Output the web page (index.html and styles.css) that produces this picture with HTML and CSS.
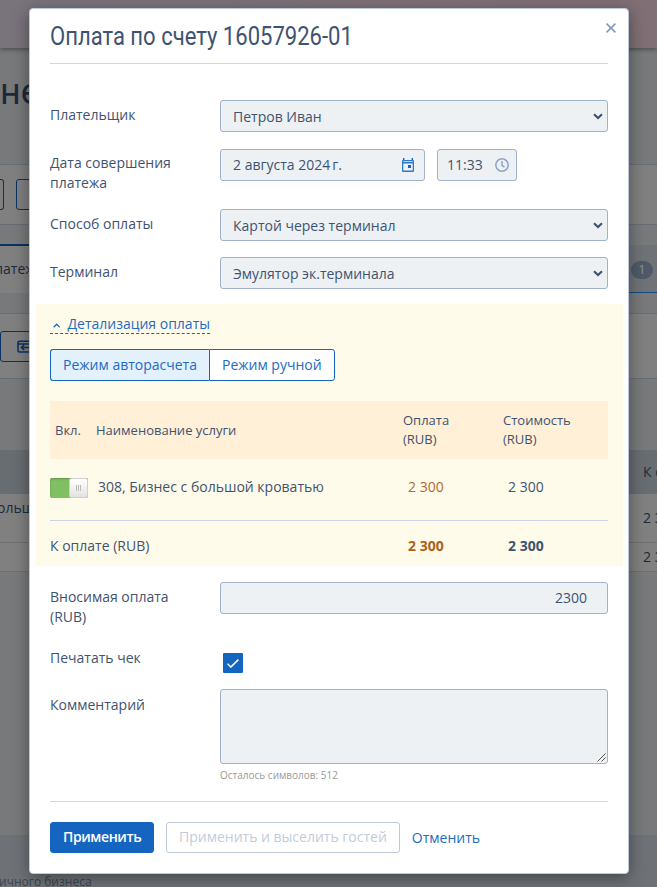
FILE: index.html
```html
<!DOCTYPE html>
<html lang="ru">
<head>
<meta charset="utf-8">
<title>Оплата по счету</title>
<link rel="stylesheet" href="styles.css">
</head>
<body>
<div class="page">
  <header class="topbar"></header>
  <section class="page-title">не</section>
  <section class="toolbar"><span class="ghost-btn ghost-btn-end"></span><span class="ghost-btn"></span></section>
  <div class="spacer"></div>
  <nav class="tabs"><span class="tab-active">латеж</span><span class="tab-count"><span class="count">1</span></span></nav>
  <div class="spacer-line"></div>
  <section class="actions">
    <span class="ghost-btn action-btn">
      <svg width="15" height="14" viewBox="0 0 15 14" fill="none" stroke="#0a3261" stroke-width="1.6"><path d="M13 3V1.2H2.5Q1 1.2 1 2.7V10.5Q1 12 2.5 12H13V10M1 4H13M14 7.5H4.5M7 5L4.5 7.5L7 10"/></svg>
    </span>
  </section>
  <div class="gap"></div>
  <div class="bg-row bg-head"><span></span><b>К о</b></div>
  <div class="bg-row bg-item"><span class="bg-name">ольш</span><span class="bg-sum">2 3</span></div>
  <div class="bg-row bg-total"><span></span><span class="bg-sum">2 3</span></div>
  <div class="rest"></div>
  <footer class="footer">ичного бизнеса</footer>
</div>

<main class="modal">
  <div class="modal-head">
    <h1><span class="title-text">Оплата по счету 16057926-01</span></h1>
    <svg class="close" width="10" height="10" viewBox="0 0 10 10" stroke="#7f99bd" stroke-width="1.5"><path d="M.6.6L9.4 9.4M9.4.6L.6 9.4"/></svg>
  </div>
  <div class="row row-payer">
    <label>Плательщик</label>
    <div class="field"><span>Петров Иван</span><svg class="chev" width="10" height="7" viewBox="0 0 10 7"><path d="M1 1.2L5 5L9 1.2" fill="none" stroke="#38506e" stroke-width="2"/></svg></div>
  </div>
  <div class="row row-date">
    <label>Дата совершения платежа</label>
    <div class="field date"><span>2 августа 2024<i></i>г.</span>
      <svg width="12" height="14" viewBox="0 0 12 14"><path d="M1 2H11Q12 2 12 3V13Q12 14 11 14H1Q0 14 0 13V3Q0 2 1 2ZM1.3 5.6V12.6H10.7V5.6ZM1.3 3.3V4.1H10.7V3.3Z" fill="#2f78cd" fill-rule="evenodd"/><path d="M1 0H2.4V2H1ZM9.6 0H11V2H9.6ZM6 7H9V10H6Z" fill="#1565c0"/></svg>
    </div>
    <div class="field time"><span>11:33</span>
      <svg width="14" height="14" viewBox="0 0 14 14" fill="none" stroke="#8ea4c6" stroke-width="1.5"><circle cx="7" cy="7" r="6.2"/><path d="M7 3V7.3L9.5 9.2"/></svg>
    </div>
  </div>
  <div class="row row-method">
    <label>Способ оплаты</label>
    <div class="field"><span>Картой через терминал</span><svg class="chev" width="10" height="7" viewBox="0 0 10 7"><path d="M1 1.2L5 5L9 1.2" fill="none" stroke="#38506e" stroke-width="2"/></svg></div>
  </div>
  <div class="row row-terminal">
    <label>Терминал</label>
    <div class="field"><span>Эмулятор эк.терминала</span><svg class="chev" width="10" height="7" viewBox="0 0 10 7"><path d="M1 1.2L5 5L9 1.2" fill="none" stroke="#38506e" stroke-width="2"/></svg></div>
  </div>

  <section class="details">
    <div class="details-link"><svg width="8" height="5" viewBox="0 0 8 5" fill="none" stroke="#1565c0" stroke-width="1.3"><path d="M.7 4.4L4 1.1L7.3 4.4"/></svg><span>Детализация оплаты</span></div>
    <div class="modes"><span class="mode mode-on">Режим авторасчета</span><span class="mode">Режим ручной</span></div>
    <div class="grid thead"><span class="th-on">Вкл.</span><span>Наименование услуги</span><span>Оплата<br>(RUB)</span><span>Стоимость<br>(RUB)</span></div>
    <div class="grid item"><span class="switch"><span class="knob"><i></i><i></i><i></i></span></span><span class="name">308, Бизнес с большой кроватью</span><span class="num pay">2 300</span><span class="num">2 300</span></div>
    <div class="grid total"><span class="total-label">К оплате (RUB)</span><span class="num pay">2 300</span><span class="num">2 300</span></div>
  </section>

  <div class="row row-amount">
    <label>Вносимая оплата (RUB)</label>
    <div class="field amount"><span>2300</span></div>
  </div>
  <div class="row row-check">
    <label>Печатать чек</label>
    <span class="checkbox"><svg width="12" height="9" viewBox="0 0 12 9" fill="none" stroke="#fff" stroke-width="1.5"><path d="M.6 4.8L3.9 8L11.4.6"/></svg></span>
  </div>
  <div class="row row-comment">
    <label>Комментарий</label>
    <div class="comment-col">
      <div class="field comment"><svg width="9" height="9" viewBox="0 0 9 9" stroke="#555" stroke-width="1"><path d="M.5 8.5L8.5.5M4.5 8.5L8.5 4.5"/></svg></div>
      <small>Осталось символов: 512</small>
    </div>
  </div>
  <div class="modal-foot">
    <span class="btn primary">Применить</span>
    <span class="btn disabled">Применить и выселить гостей</span>
    <span class="cancel">Отменить</span>
  </div>
</main>
</body>
</html>
```
FILE: styles.css
```css
* { box-sizing: border-box; }
body {
  margin: 0;
  width: 657px;
  height: 887px;
  overflow: hidden;
  position: relative;
  font: 14px/20px "Open Sans", "Noto Sans", sans-serif;
  color: #3f5371;
}

.page {
  height: 887px;
  display: flex;
  flex-direction: column;
  background: #77797b;
  color: #1e2938;
  overflow: hidden;
}
.page > * { flex: none; }
.topbar {
  height: 48px;
  background: linear-gradient(90deg, #79737c, #806f75);
  box-shadow: 0 1px 5px rgba(0, 0, 0, .45);
}
.page-title {
  height: 117px;
  padding-top: 23px;
  border-bottom: 1px solid #686d76;
  font: 36px/42px Roboto, sans-serif;
}
.toolbar {
  height: 60px;
  display: flex;
  gap: 12px;
  padding-top: 14px;
  background: #808080;
  border-bottom: 1px solid #686d76;
}
.ghost-btn {
  width: 60px;
  height: 31px;
  border: 1px solid #0b3260;
  border-radius: 3px;
}
.ghost-btn-end { width: 4px; border-left: 0; border-radius: 0 3px 3px 0; }
.spacer { height: 20px; }
.tabs {
  height: 48px;
  display: flex;
  justify-content: space-between;
  background: #6f7378;
}
.tab-active {
  width: 100px;
  height: 49px;
  padding-top: 13px;
  background: #808080;
  border-top: 2px solid #0b3260;
  text-indent: -5px;
  margin-top: -1px;
}
.tab-count {
  width: 100px;
  display: flex;
  justify-content: flex-end;
  padding: 16px 4px 0 0;
  border-bottom: 1px solid #0f4a80;
}
.count {
  width: 22px;
  height: 18px;
  border-radius: 9px;
  background: #4f5a68;
  color: #8c929b;
  font-size: 12px;
  line-height: 17px;
  text-align: center;
}
.spacer-line { height: 21px; border-bottom: 1px solid #686d76; }
.actions {
  height: 65px;
  padding-top: 17px;
  background: #808080;
  border-bottom: 1px solid #686d76;
}
.action-btn { display: flex; align-items: center; padding-left: 16px; }
.gap { height: 71px; }
.bg-row {
  display: flex;
  justify-content: space-between;
  background: #808080;
  border-bottom: 1px solid #6e6f72;
}
.bg-head { height: 44px; background: #686d71; border: 0; padding-top: 12px; }
.bg-head b { width: 14px; font-weight: 400; white-space: nowrap; }
.bg-item { height: 49px; }
.bg-name { padding-top: 4px; margin-left: -3px; }
.bg-sum { width: 14px; white-space: nowrap; }
.bg-item .bg-sum { padding-top: 14px; }
.bg-total { height: 29px; padding-top: 4px; }
.rest { height: 263px; }
.footer {
  height: 52px;
  padding-top: 37px;
  background: #6e7277;
  color: #3c4553;
  font-size: 12px;
  text-indent: -1px;
}

.modal {
  position: absolute;
  left: 29px;
  top: 8px;
  width: 600px;
  height: 866px;
  padding: 0 20px;
  background: #fff;
  border: 1px solid #bdc9d8;
  border-radius: 4px;
  box-shadow: 0 4px 16px rgba(0, 0, 0, .4);
}
.modal-head {
  height: 55px;
  display: flex;
  justify-content: space-between;
  border-bottom: 1px solid #ccd5e0;
}
h1 { margin: 0; padding-top: 12px; font: 400 25px/32px Roboto, sans-serif; white-space: nowrap; }
.title-text { display: inline-block; transform: scaleX(.882); transform-origin: left; }
.close { margin: 14px -8px 0 0; }

.row { display: grid; grid-template-columns: 150px 388px; column-gap: 20px; align-items: start; }
.row label { padding-top: 5px; }
.field {
  height: 32px;
  display: flex;
  align-items: center;
  justify-content: space-between;
  padding: 1px 4px 0 12px;
  background: #edf1f4;
  border: 1px solid #9fb1cb;
  border-radius: 3px;
}
.row-payer { margin-top: 36px; height: 49px; }
.row-date { grid-template-columns: 150px 205px 80px; height: 60px; }
.row-date label { padding-top: 4px; }
.row-date .time { margin-left: -8px; }
.row-method { height: 48px; }
.row-terminal { height: 47px; }
.date { padding: 0 10px 1px 12px; }
.date i { display: inline-block; width: 2px; }
.time { width: 80px; padding: 0 7px 1px 9px; }

.details {
  width: 587px;
  height: 262px;
  margin-left: -14px;
  padding: 10px 15px 0 14px;
  background: #fffbea;
}
.details-link {
  width: 160px;
  height: 20px;
  display: flex;
  align-items: center;
  gap: 7px;
  padding-left: 3px;
  border-bottom: 1px dashed #1565c0;
  color: #1e6bc4;
  white-space: nowrap;
}
.details-link svg { margin-top: 3px; }
.modes { display: flex; margin-top: 15px; }
.mode {
  height: 32px;
  padding: 0 12px;
  border: 1px solid #1565c0;
  border-radius: 0 3px 3px 0;
  background: #fff;
  color: #1e6bc4;
  line-height: 30px;
  white-space: nowrap;
}
.mode-on { border-right: 0; border-radius: 3px 0 0 3px; background: #e3f1fd; }
.mode + .mode { border-left: 1px solid #1565c0; }
.grid { display: grid; grid-template-columns: 46px 307px 100px 105px; align-items: center; }
.thead { height: 58px; margin-top: 20px; background: #fff0d7; font-size: 13px; line-height: 19px; }
.th-on { padding-left: 5px; }
.item { height: 62px; padding-bottom: 4px; border-bottom: 1px solid #ccd5e4; }
.num { padding-left: 5px; }
.name { padding-left: 2px; }
.item .name, .item .num { padding-bottom: 2px; }
.pay { color: #b56a2a; }
.total { height: 50px; grid-template-columns: 353px 100px 105px; }
.total .num { font-weight: 700; }
.total .pay { color: #ad6117; }
.switch {
  width: 38px;
  height: 20px;
  display: flex;
  justify-content: flex-end;
  background: #7fc062;
  border-radius: 2px;
  box-shadow: inset 0 1px 2px rgba(0, 0, 0, .25);
}
.knob {
  width: 19px;
  height: 20px;
  display: flex;
  align-items: center;
  justify-content: center;
  gap: 1px;
  background: linear-gradient(#fff, #e2e2e2);
  border: 1px solid #d0d0d0;
  border-radius: 2px;
}
.knob i { width: 1px; height: 6px; background: #bbb; }

.row-amount { margin-top: 16px; height: 66px; }
.amount { justify-content: flex-end; padding: 0 20px 1px 12px; }
.row-check { height: 41px; }
.row-check label { padding-top: 0; }
.checkbox {
  width: 20px;
  height: 20px;
  margin: 5px 0 0 3px;
  display: flex;
  align-items: center;
  justify-content: center;
  background: #1565c0;
  border-radius: 1px;
}
.row-comment label { padding-top: 6px; }
.comment { height: 75px; align-items: flex-end; justify-content: flex-end; padding: 0 1px 1px; }
.comment-col small { display: block; margin-top: 3px; color: #999; font-size: 10px; line-height: 16px; }
.modal-foot {
  margin-top: 18px;
  padding-top: 20px;
  display: flex;
  border-top: 1px solid #ccd5e0;
}
.btn {
  height: 31px;
  padding: 0 12px;
  border: 1px solid #1565c0;
  border-radius: 3px;
  line-height: 28px;
  white-space: nowrap;
}
.primary { width: 104px; background: #1565c0; color: #fff; font-weight: 600; letter-spacing: -.4px; }
.disabled { margin-left: 12px; border-color: #bdc8da; color: #c2ccdc; }
.cancel { margin-left: 12px; padding-top: 6px; color: #1e6bc4; }
```
